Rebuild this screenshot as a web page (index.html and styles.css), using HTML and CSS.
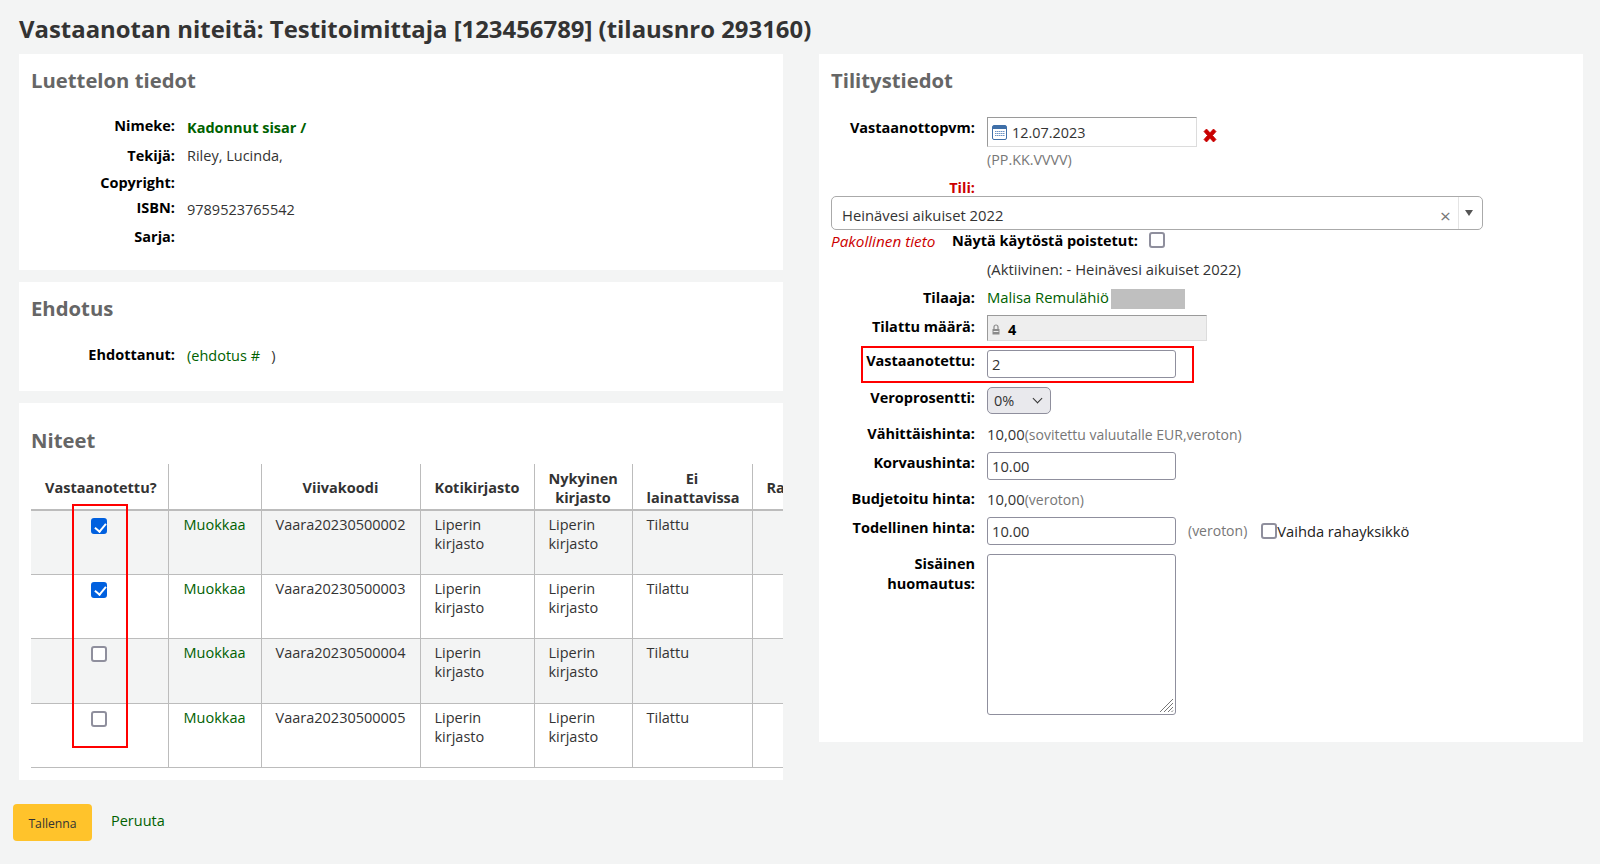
FILE: index.html
```html
<!DOCTYPE html>
<html lang="fi">
<head>
<meta charset="utf-8">
<title>Vastaanotan niteitä</title>
<link rel="stylesheet" href="styles.css">
</head>
<body>
<h1 class="page-title">Vastaanotan niteitä: Testitoimittaja [123456789] (tilausnro 293160)</h1>
<div class="columns">
  <div class="col">
    <section class="panel info-panel">
      <h3 class="panel-title">Luettelon tiedot</h3>
      <div class="info-row h30"><span class="label">Nimeke:</span><span class="value"><a class="link strong" href="#">Kadonnut sisar /</a></span></div>
      <div class="info-row h27"><span class="label">Tekijä:</span><span class="value flush">Riley, Lucinda,</span></div>
      <div class="info-row h25"><span class="label">Copyright:</span></div>
      <div class="info-row h29"><span class="label">ISBN:</span><span class="value">9789523765542</span></div>
      <div class="info-row"><span class="label">Sarja:</span></div>
    </section>
    <section class="panel suggestion-panel">
      <h3 class="panel-title">Ehdotus</h3>
      <div class="info-row"><span class="label">Ehdottanut:</span><span class="value near"><a class="link" href="#">(ehdotus # </a>&nbsp;&nbsp;)</span></div>
    </section>
    <section class="panel items-panel">
      <h3 class="panel-title">Niteet</h3>
      <div class="table-clip">
        <table class="items">
          <colgroup><col class="c1"><col class="c2"><col class="c3"><col class="c4"><col class="c5"><col class="c6"><col class="c7"></colgroup>
          <thead>
            <tr><th>Vastaanotettu?</th><th></th><th>Viivakoodi</th><th>Kotikirjasto</th><th>Nykyinen kirjasto</th><th>Ei lainattavissa</th><th class="cut">Ra</th></tr>
          </thead>
          <tbody>
            <tr class="stripe"><td class="center"><input class="check" type="checkbox" checked></td><td class="center"><a class="link" href="#">Muokkaa</a></td><td class="center">Vaara20230500002</td><td>Liperin kirjasto</td><td>Liperin kirjasto</td><td>Tilattu</td><td></td></tr>
            <tr><td class="center"><input class="check" type="checkbox" checked></td><td class="center"><a class="link" href="#">Muokkaa</a></td><td class="center">Vaara20230500003</td><td>Liperin kirjasto</td><td>Liperin kirjasto</td><td>Tilattu</td><td></td></tr>
            <tr class="stripe tall"><td class="center"><input class="check" type="checkbox"></td><td class="center"><a class="link" href="#">Muokkaa</a></td><td class="center">Vaara20230500004</td><td>Liperin kirjasto</td><td>Liperin kirjasto</td><td>Tilattu</td><td></td></tr>
            <tr><td class="center"><input class="check" type="checkbox"></td><td class="center"><a class="link" href="#">Muokkaa</a></td><td class="center">Vaara20230500005</td><td>Liperin kirjasto</td><td>Liperin kirjasto</td><td>Tilattu</td><td></td></tr>
          </tbody>
        </table>
      </div>
      <div class="mark mark-checks"></div>
    </section>
    <div class="actions">
      <button class="save" type="button">Tallenna</button>
      <a class="link cancel" href="#">Peruuta</a>
    </div>
  </div>

  <div class="col">
    <section class="panel account-panel">
      <h3 class="panel-title">Tilitystiedot</h3>
      <div class="form-row r-date">
        <span class="label offset1">Vastaanottopvm:</span>
        <div>
          <div class="date-line">
            <div class="date-input">
              <svg class="cal" width="15" height="15" viewBox="0 0 15 15"><rect x=".5" y=".5" width="14" height="14" rx="1.5" fill="#fff" stroke="#3f6fa8"/><rect x="1" y="1" width="13" height="3" fill="#3f6fa8"/><path d="M3 6.5h9M3 8.5h9M3 10.5h9M4 6v6M6 6v6M8 6v6M10 6v6M12 6v6" stroke="#6c93c4" stroke-dasharray="1 1"/></svg>
              <span>12.07.2023</span>
            </div>
            <svg class="clear-date" width="14" height="15" viewBox="0 0 14 15"><path d="M1 3.5 3.5 1 7 4.8 10.5 1 13 3.5 9.5 7.5 13 11.5 10.5 14 7 10.2 3.5 14 1 11.5 4.5 7.5Z" fill="#c90000" stroke="#c90000" stroke-width=".8" stroke-linejoin="round"/></svg>
          </div>
          <div class="hint">(PP.KK.VVVV)</div>
        </div>
      </div>
      <div class="tili-label"><span class="label required">Tili:</span></div>
      <div class="select2">
        <span class="select2-text">Heinävesi aikuiset 2022</span>
        <span class="select2-clear">×</span>
        <span class="select2-arrow"></span>
      </div>
      <div class="required-row">
        <em class="required-note">Pakollinen tieto</em>
        <span class="inline-label">Näytä käytöstä poistetut:</span>
        <input class="check" type="checkbox">
      </div>
      <div class="form-row m8"><span class="label"></span><span class="value-text">(Aktiivinen: - Heinävesi aikuiset 2022)</span></div>
      <div class="form-row m8 one-line"><span class="label offset1">Tilaaja:</span><span class="value-text"><a class="link" href="#">Malisa Remulähiö</a></span><span class="redacted"></span></div>
      <div class="form-row m8">
        <span class="label offset2">Tilattu määrä:</span>
        <div class="readonly">
          <svg width="8" height="11" viewBox="0 0 8 11"><path d="M2 5V3a2 2 0 0 1 4 0v2" fill="none" stroke="#8a8a8a" stroke-width="1.2"/><rect x="0.5" y="5" width="7" height="5.5" fill="#8a8a8a"/><rect x="1.5" y="7" width="5" height="1" fill="#eee"/></svg>
          <b>4</b>
        </div>
      </div>
      <div class="form-row m9">
        <span class="label offset1">Vastaanotettu:</span>
        <input class="text-input" type="text" value="2">
      </div>
      <div class="form-row m9">
        <span class="label offset1">Veroprosentti:</span>
        <div class="select-wrap">
          <select class="native-select"><option>0%</option></select>
        </div>
      </div>
      <div class="form-row m10 one-line"><span class="label">Vähittäishinta:</span><span class="value-text">10,00<span class="muted">(sovitettu valuutalle EUR,veroton)</span></span></div>
      <div class="form-row m8"><span class="label offset1">Korvaushinta:</span><input class="text-input" type="text" value="10.00"></div>
      <div class="form-row m9 one-line"><span class="label">Budjetoitu hinta:</span><span class="value-text">10,00<span class="muted">(veroton)</span></span></div>
      <div class="form-row m8">
        <span class="label offset1">Todellinen hinta:</span>
        <input class="text-input" type="text" value="10.00">
        <span class="muted after-input">(veroton)</span>
        <input class="check change-check" type="checkbox">
        <span class="after-check">Vaihda rahayksikkö</span>
      </div>
      <div class="form-row m9">
        <span class="label">Sisäinen huomautus:</span>
        <div class="notes-wrap">
          <textarea class="notes"></textarea>
          <svg class="grip" width="15" height="15" viewBox="0 0 15 15"><path d="M14 1 1 14M14 5 5 14M14 9 9 14M14 12.5 12.5 14" fill="none" stroke="#777" stroke-width="1"/></svg>
        </div>
      </div>
      <div class="mark mark-received"></div>
    </section>
  </div>
</div>
</body>
</html>
```
FILE: styles.css
```css
* { box-sizing: border-box; }
html, body { margin: 0; padding: 0; }
body {
  background: #f3f4f4;
  font-family: "Open Sans", "Noto Sans", sans-serif;
  font-size: 14.5px;
  line-height: 19px;
  color: #333;
  height: 864px;
  overflow: hidden;
}
.page-title {
  margin: 0;
  padding: 12px 0 0 19px;
  height: 54px;
  font-size: 23.9px;
  line-height: 34px;
  font-weight: 700;
  color: #333;
}
.columns { display: flex; gap: 36px; padding-left: 19px; }
.col { width: 764px; display: flex; flex-direction: column; gap: 12px; }
.panel { background: #fff; padding: 0 12px; position: relative; }
.panel-title {
  margin: 0;
  font-size: 20.3px;
  line-height: 28px;
  font-weight: 700;
  color: #666;
}
.link { color: #006100; text-decoration: none; }
.strong { font-weight: 700; }
.label { width: 144px; flex: none; text-align: right; font-weight: 700; color: #000; line-height: 20px; }
.info-panel { height: 216px; padding-top: 12px; }
.info-panel .panel-title { margin-bottom: 22px; }
.info-row { display: flex; gap: 12px; }
.h30 { height: 30px; }
.h27 { height: 27px; }
.h25 { height: 25px; }
.h29 { height: 29px; }
.value { padding-top: 2px; line-height: 20px; color: #333; }
.value.flush { padding-top: 0; }
.value.near { padding-top: 1px; }
.suggestion-panel { height: 109px; padding-top: 12px; }
.suggestion-panel .panel-title { margin-bottom: 23px; }
.items-panel { height: 377px; padding: 23px 0 0 12px; }
.table-clip { overflow: hidden; margin-top: 10px; }
.items { border-collapse: collapse; table-layout: fixed; width: 827px; }
.c1 { width: 137px; } .c2 { width: 93px; } .c3 { width: 159px; } .c4 { width: 114px; }
.c5 { width: 98px; } .c6 { width: 120px; } .c7 { width: 106px; }
.items th {
  height: 46px;
  padding: 2px 14px 0;
  font-weight: 700;
  text-align: center;
  color: #333;
  border-left: 1px solid #bcbcbc;
  border-bottom: 2px solid #bcbcbc;
}
.items th.cut { text-align: left; }
.items th:first-child, .items td:first-child { border-left: 0; }
.items td {
  height: 64px;
  padding: 4px 14px 0;
  vertical-align: top;
  border-left: 1px solid #bcbcbc;
  border-bottom: 1px solid #bcbcbc;
}
.items .tall td { height: 65px; }
.items td.center { text-align: center; padding-left: 4px; padding-right: 4px; }
.stripe td { background: #f3f4f4; }
.check {
  appearance: none;
  -webkit-appearance: none;
  width: 16px;
  height: 16px;
  margin: 1px 0 0;
  border: 2px solid #8f8f9d;
  border-radius: 3px;
  background: #fff;
  position: relative;
  vertical-align: top;
}
.items .check { margin-top: 3px; }
.check:checked { background: #0060df; border-color: #0060df; }
.check:checked::after {
  content: "";
  position: absolute;
  left: 3.5px;
  top: 0.5px;
  width: 5px;
  height: 9px;
  border: solid #fff;
  border-width: 0 2px 2px 0;
  transform: rotate(40deg);
}
.mark { position: absolute; border: 2px solid #f00; pointer-events: none; }
.mark-checks { left: 53px; top: 101px; width: 56px; height: 244px; }
.mark-received { left: 42px; top: 292px; width: 333px; height: 37px; }
.actions { display: flex; align-items: flex-start; margin: 12px 0 0 -6px; gap: 19px; }
.save {
  width: 79px;
  height: 37px;
  background: #ffc32b;
  border: 0;
  border-radius: 4px;
  font: 12.2px/19px "Open Sans", "Noto Sans", sans-serif;
  padding: 2px 0 0;
  color: #333;
}
.cancel { margin-top: 7px; }
.account-panel { height: 688px; padding-top: 12px; }
.account-panel .panel-title { margin-bottom: 23px; }
.form-row { display: flex; gap: 12px; align-items: flex-start; }
.one-line { height: 20px; }
.offset1 { padding-top: 1px; }
.offset2 { padding-top: 2px; }
.r-date { height: 61px; }
.date-line { display: flex; gap: 6px; }
.date-input {
  width: 210px;
  height: 30px;
  display: flex;
  align-items: center;
  gap: 5px;
  padding-left: 4px;
  background: #fff;
  border: 1px solid;
  border-color: #9a9a9a #dcdcdc #dcdcdc #9a9a9a;
  font-size: 14.4px;
}
.clear-date { margin-top: 11px; }
.hint { color: #777; margin-top: 3px; line-height: 20px; font-size: 14.3px; }
.tili-label { height: 18px; display: flex; margin-top: 0; }
.required { color: #c00; }
.select2 {
  width: 652px;
  height: 34px;
  border: 1px solid #aaa;
  border-radius: 5px;
  display: flex;
  align-items: center;
  padding-left: 10px;
  position: relative;
}
.select2-text { flex: 1; padding-top: 5px; font-size: 14.8px; }
.select2-clear { font-size: 19px; color: #777; width: 18px; padding-top: 7px; }
.select2-arrow {
  width: 24px;
  align-self: stretch;
  border-left: 1px solid #e4e4e4;
  position: relative;
}
.select2-arrow::after {
  content: "";
  position: absolute;
  left: 6px;
  top: 13px;
  border: 4px solid transparent;
  border-top: 6px solid #555;
  border-bottom: 0;
}
.required-row { display: flex; align-items: flex-start; margin-top: 1px; line-height: 20px; }
.required-note { color: #c00; width: 121px; flex: none; font-size: 15.3px; }
.inline-label { font-weight: 700; color: #000; width: 197px; flex: none; }
.m8 { margin-top: 8px; }
.m9 { margin-top: 9px; }
.m10 { margin-top: 10px; }
.value-text { line-height: 20px; font-size: 14.8px; }
.redacted { width: 74px; height: 20px; background: #bfbfbf; margin: 2px 0 0 -10px; }
.muted { color: #777; font-size: 14px; }
.readonly {
  width: 220px;
  height: 26px;
  display: flex;
  align-items: center;
  gap: 8px;
  padding: 2px 0 0 4px;
  background: #eee;
  border: 1px solid;
  border-color: #9a9a9a #dcdcdc #dcdcdc #9a9a9a;
  color: #000;
}
.text-input {
  width: 189px;
  height: 28px;
  padding: 0 4px;
  border: 1px solid #8f8f9d;
  border-radius: 3px;
  font: 14.7px/20px "Open Sans", "Noto Sans", sans-serif;
  color: #333;
  background: #fff;
  outline: 0;
}
.select-wrap { position: relative; width: 64px; height: 27px; }
.select-wrap::after {
  content: "";
  position: absolute;
  right: 10px;
  top: 8px;
  width: 6px;
  height: 6px;
  border: solid #333;
  border-width: 0 1.6px 1.6px 0;
  transform: rotate(45deg);
  pointer-events: none;
}
.native-select {
  appearance: none;
  -webkit-appearance: none;
  width: 64px;
  height: 27px;
  padding: 0 0 0 6px;
  background: #e9e9ed;
  border: 1px solid #8f8f9d;
  border-radius: 5px;
  font: 14.5px/20px "Open Sans", "Noto Sans", sans-serif;
  color: #333;
}
.after-input { margin-top: 4px; line-height: 20px; }
.change-check { margin: 6px 0 0 2px; flex: none; }
.after-check { margin: 4px 0 0 -12px; line-height: 20px; color: #222; font-size: 14.7px; }
.notes-wrap { position: relative; width: 189px; height: 161px; }
.notes {
  width: 189px;
  height: 161px;
  border: 1px solid #8f8f9d;
  border-radius: 3px;
  background: #fff;
  display: block;
  resize: none;
}
.grip { position: absolute; right: 2px; bottom: 2px; }
```
